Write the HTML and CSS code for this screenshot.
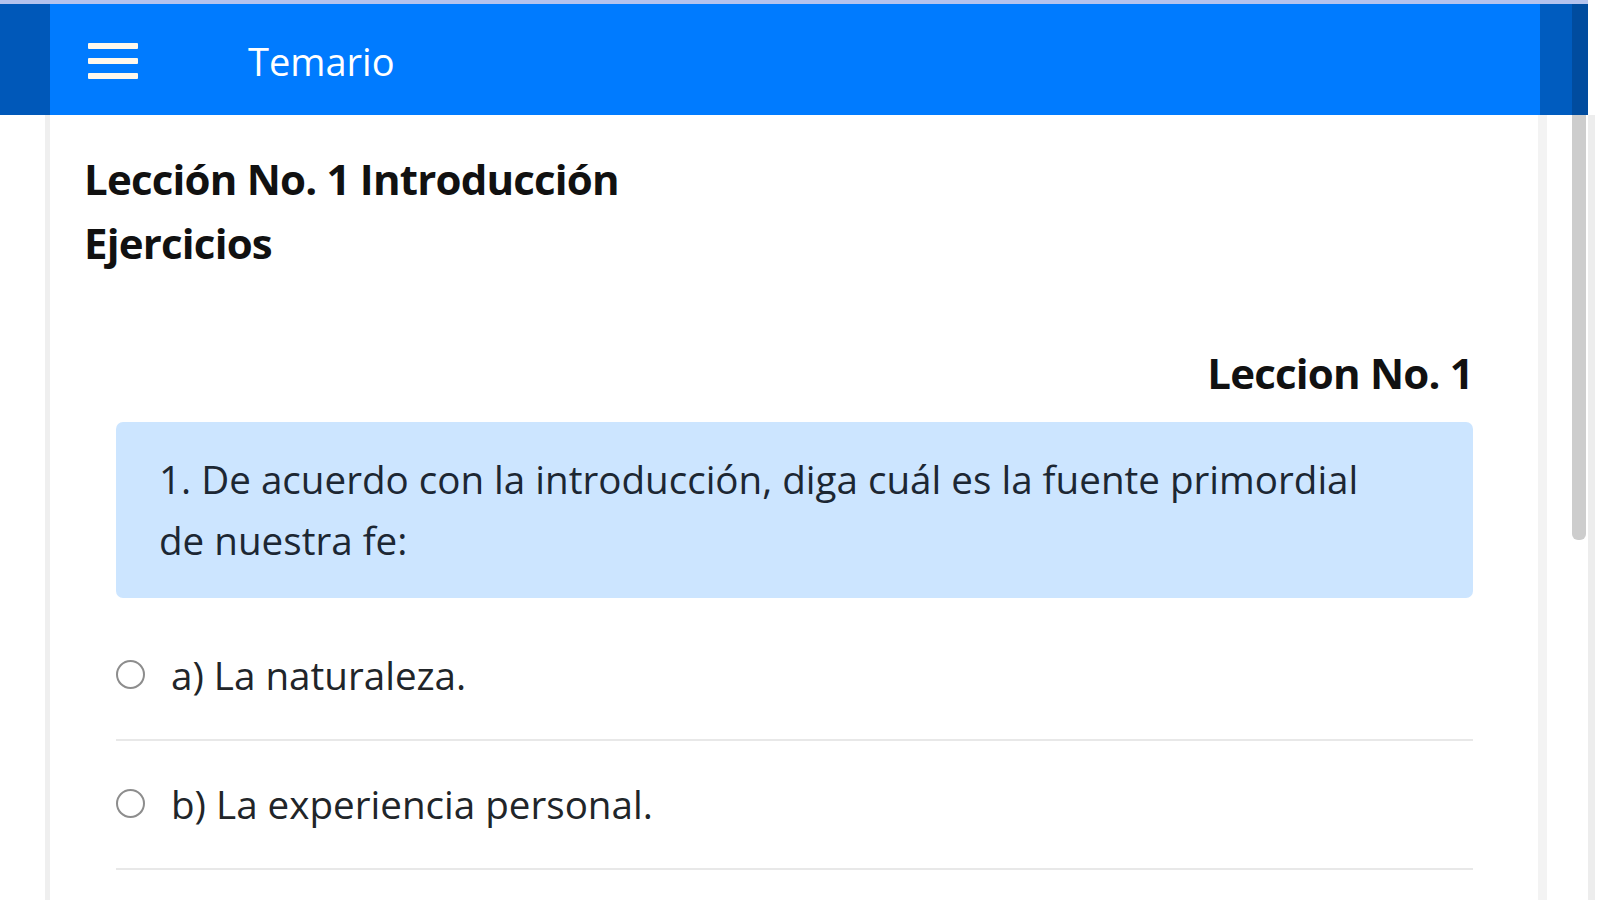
FILE: index.html
```html
<!DOCTYPE html>
<html lang="es">
<head>
<meta charset="utf-8">
<title>Temario</title>
<link rel="stylesheet" href="styles.css">
</head>
<body>
<div class="screen">
  <div class="topstrip"></div>
  <div class="bar-row">
    <div class="bar-side-left"></div>
    <header class="appbar">
      <button class="menu-btn" aria-label="Menú">
        <span class="menu-line"></span>
        <span class="menu-line"></span>
        <span class="menu-line"></span>
      </button>
      <span class="appbar-title">Temario</span>
    </header>
    <div class="bar-side-right">
      <div class="bar-shade"></div>
      <div class="bar-shade-dark"></div>
    </div>
    <div class="bar-end"></div>
  </div>
  <div class="body-row">
    <div class="gutter-left"></div>
    <main class="content">
      <h1 class="lesson-title">Lección No. 1 Introducción</h1>
      <h2 class="lesson-sub">Ejercicios</h2>
      <section class="quiz">
        <h3 class="quiz-label">Leccion No. 1</h3>
        <div class="question">1. De acuerdo con la introducción, diga cuál es la fuente primordial de nuestra fe:</div>
        <ul class="options">
          <li class="option"><label class="option-label"><input class="radio" type="radio" name="q1"><span>a) La naturaleza.</span></label></li>
          <li class="option"><label class="option-label"><input class="radio" type="radio" name="q1"><span>b) La experiencia personal.</span></label></li>
        </ul>
      </section>
    </main>
    <div class="gutter-right">
      <div class="edge-light"></div>
      <div class="gap-white"></div>
      <div class="scrollbar"><div class="scroll-thumb"></div></div>
      <div class="gap-thin"></div>
      <div class="edge-outer"></div>
      <div class="gap-end"></div>
    </div>
  </div>
</div>
</body>
</html>
```
FILE: styles.css
```css
* { box-sizing: border-box; }
html, body { margin: 0; padding: 0; background: #ffffff; }
body { font-family: "Open Sans", "Noto Sans", sans-serif; color: #1b1e21; }

.screen { width: 1600px; height: 900px; overflow: hidden; display: flex; flex-direction: column; }

.topstrip { height: 4px; width: 1588px; background: #b4c3ee; flex: none; }

.bar-row { display: flex; height: 111px; flex: none; }
.bar-side-left { width: 50px; background: #0058b9; }
.appbar { width: 1490px; background: #007bff; display: flex; align-items: center; padding-left: 38px; }
.menu-btn { background: none; border: 0; padding: 0; width: 50px; height: 36px; display: flex; flex-direction: column; justify-content: space-between; margin-top: 3px; cursor: pointer; }
.menu-line { display: block; width: 50px; height: 6px; background: #fff8ec; border-radius: 1px; }
.appbar-title { color: #ffffff; font-size: 38px; margin-left: 110px; margin-top: 2px; }
.bar-side-right { display: flex; }
.bar-shade { width: 32px; background: #005cbf; }
.bar-shade-dark { width: 16px; background: #004c9f; }
.bar-end { width: 12px; background: #ffffff; }

.body-row { display: flex; flex: 1; overflow: hidden; }
.gutter-left { width: 50px; flex: none; border-right: 5px solid #efefef; }
.content { width: 1488px; flex: none; padding: 32px 34px 0; }

.lesson-title, .lesson-sub { margin: 0; font-size: 42px; font-weight: 700; letter-spacing: -0.8px; line-height: 64px; color: #111111; }
.quiz { padding: 66px 31px 0 32px; }
.quiz-label { margin: 0 0 17px; text-align: right; font-size: 42px; font-weight: 700; letter-spacing: -0.8px; line-height: 64px; color: #111111; }

.question { background: #cce5ff; border-radius: 7px; padding: 27px 75px 27px 43px; font-size: 38.6px; line-height: 61px; color: #1c2733; }

.options { list-style: none; margin: 14px 0 0; padding: 0; }
.option { border-bottom: 2px solid #e8e8e8; padding: 33px 0 33px; }
.option-label { display: flex; align-items: center; gap: 26px; font-size: 38.6px; line-height: 61px; color: #212529; cursor: pointer; }
.radio { appearance: none; -webkit-appearance: none; margin: -2px 0 0; width: 29px; height: 29px; border: 2.5px solid #8d8d8d; border-radius: 50%; background: #ffffff; flex: none; }

.gutter-right { display: flex; flex: none; width: 62px; }
.edge-light { width: 9px; background: #f3f3f3; }
.gap-white { width: 25px; background: #ffffff; }
.scrollbar { width: 14px; background: #ffffff; }
.scroll-thumb { height: 425px; background: #cdcdcd; border-radius: 0 0 6px 6px; }
.gap-thin { width: 2px; }
.edge-outer { width: 7px; background: #ededed; }
.gap-end { width: 5px; }
```
